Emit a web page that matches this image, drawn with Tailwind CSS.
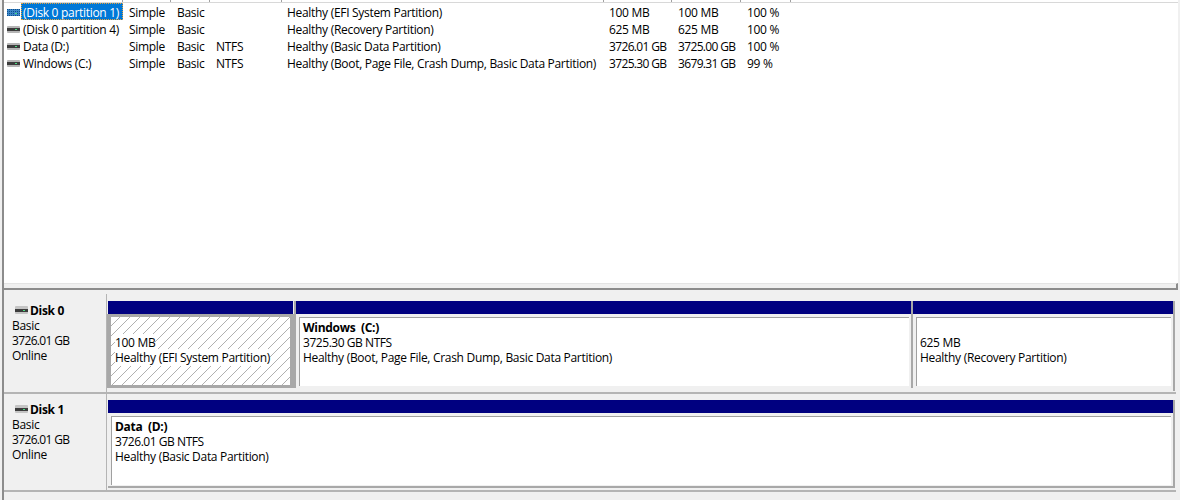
<!DOCTYPE html>
<html lang="en">
<head>
  <meta charset="UTF-8" />
  <title>Disk Management</title>
  <script src="https://cdn.jsdelivr.net/npm/@tailwindcss/browser@4"></script>
</head>
<body class="w-[1180px] h-[500px] overflow-hidden bg-[#f0f0f0] text-[12px] leading-[15px] text-black font-['Open_Sans',sans-serif] tracking-[-0.3px]">

  <!-- Volume list -->
  <div class="ml-[2px] mr-[2px] h-[290px] border-l-2 border-[#8c8c8c] flex flex-col">
    <div class="h-[283px] bg-white">
      <!-- column header, scrolled almost out of view -->
      <div class="h-[3px] grid grid-cols-[119px_48px_39px_72px_322px_68px_69px_50px_1fr] border-b border-[#d8d8d8]">
        <div class="border-r border-[#a0a0a0]"></div>
        <div class="border-r border-[#a0a0a0]"></div>
        <div class="border-r border-[#a0a0a0]"></div>
        <div class="border-r border-[#a0a0a0]"></div>
        <div class="border-r border-[#a0a0a0]"></div>
        <div class="border-r border-[#a0a0a0]"></div>
        <div class="border-r border-[#a0a0a0]"></div>
        <div class="border-r border-[#a0a0a0]"></div>
      </div>

      <div class="mt-[1px] grid grid-cols-[17px_102px_48px_39px_71px_322px_69px_69px_1fr] auto-rows-[17px] items-center">
        <div class="pl-[3px]">
          <svg width="13" height="7" viewBox="0 0 13 7" class="block"><rect width="13" height="7" rx="1" fill="#3d86c6"/><path d="M0 .5h13M0 2.5h13M0 4.5h13M0 6.5h13" stroke="#0a4f8f" stroke-dasharray="1 1"/><rect x="8" y="4" width="2" height="1" fill="#4ade80"/></svg>
        </div>
        <div class="self-start -mt-[1px] h-[17px] bg-[#0078d7] text-white pl-[2px] leading-[19px] outline-1 outline-dotted outline-offset-[-1px] outline-[#e8a33d]">(Disk 0 partition 1)</div>
        <div class="pl-[6px]">Simple</div><div class="pl-[6px]">Basic</div><div></div>
        <div class="pl-[6px]">Healthy (EFI System Partition)</div>
        <div class="pl-[6px]">100 MB</div><div class="pl-[6px]">100 MB</div><div class="pl-[6px]">100 %</div>

        <div class="pl-[3px]"><svg width="13" height="7" viewBox="0 0 13 7" class="block"><rect width="13" height="7" rx="1" fill="#b5b5b5"/><rect y="2" width="13" height="3" fill="#3c3c3c"/><rect x="8" y="3" width="2" height="1" fill="#4ade80"/></svg></div>
        <div class="pl-[2px]">(Disk 0 partition 4)</div>
        <div class="pl-[6px]">Simple</div><div class="pl-[6px]">Basic</div><div></div>
        <div class="pl-[6px]">Healthy (Recovery Partition)</div>
        <div class="pl-[6px]">625 MB</div><div class="pl-[6px]">625 MB</div><div class="pl-[6px]">100 %</div>

        <div class="pl-[3px]"><svg width="13" height="7" viewBox="0 0 13 7" class="block"><rect width="13" height="7" rx="1" fill="#b5b5b5"/><rect y="2" width="13" height="3" fill="#3c3c3c"/><rect x="8" y="3" width="2" height="1" fill="#4ade80"/></svg></div>
        <div class="pl-[2px]">Data (D:)</div>
        <div class="pl-[6px]">Simple</div><div class="pl-[6px]">Basic</div><div class="pl-[6px]">NTFS</div>
        <div class="pl-[6px]">Healthy (Basic Data Partition)</div>
        <div class="pl-[6px] tracking-[-0.65px]">3726.01 GB</div><div class="pl-[6px] tracking-[-0.65px]">3725.00 GB</div><div class="pl-[6px]">100 %</div>

        <div class="pl-[3px]"><svg width="13" height="7" viewBox="0 0 13 7" class="block"><rect width="13" height="7" rx="1" fill="#b5b5b5"/><rect y="2" width="13" height="3" fill="#3c3c3c"/><rect x="8" y="3" width="2" height="1" fill="#4ade80"/></svg></div>
        <div class="pl-[2px]">Windows (C:)</div>
        <div class="pl-[6px]">Simple</div><div class="pl-[6px]">Basic</div><div class="pl-[6px]">NTFS</div>
        <div class="pl-[6px] whitespace-nowrap">Healthy (Boot, Page File, Crash Dump, Basic Data Partition)</div>
        <div class="pl-[6px] tracking-[-0.65px]">3725.30 GB</div><div class="pl-[6px] tracking-[-0.65px]">3679.31 GB</div><div class="pl-[6px]">99 %</div>
      </div>
    </div>
    <!-- splitter band -->
    <div class="h-[7px] border-t border-[#e4e4e4] border-b-2 border-b-[#8c8c8c] border-r-2 border-r-[#8c8c8c]"></div>
  </div>

  <!-- Graphical view -->
  <div class="ml-[2px] mr-[4px] h-[210px] border-l-2 border-[#8c8c8c] pt-[4px]">

    <!-- Disk 0 -->
    <div class="flex h-[100px] border-b-2 border-[#b4b4b4]">
      <div class="w-[103px] shrink-0 border-r border-[#b4b4b4] pl-[8px] pt-[9px]">
        <div class="flex items-center h-[15px] font-bold">
          <svg width="13" height="8" viewBox="0 0 13 8" class="block ml-[3px] mr-[2px] mb-[2px]"><rect width="13" height="8" rx="1" fill="#c4c4c4"/><rect y="3" width="13" height="3" fill="#3c3c3c"/><rect x="8" y="4" width="2" height="1" fill="#4ade80"/></svg>
          Disk 0
        </div>
        <div>Basic</div><div class="tracking-[-0.65px]">3726.01 GB</div><div>Online</div>
      </div>
      <div class="flex-1 flex pt-[7px] pl-[1px]">
        <div class="w-[186px]">
          <div class="h-[13px] mr-[1px] bg-[#000080]"></div>
          <div class="-ml-[1px] h-[74px] border-x-4 border-y-[3px] border-[#a8a8a8] bg-[repeating-linear-gradient(135deg,#ffffff_0px,#ffffff_6px,#b0b0b0_6px,#b0b0b0_7.07px)] pl-[4px] pt-[18px]">
            <div><span class="bg-white">100 MB</span></div>
            <div><span class="bg-white">Healthy (EFI System Partition)</span></div>
          </div>
        </div>
        <div class="w-[2px] h-[87px] bg-[#a8a8a8]"></div>
        <div class="w-[615px]">
          <div class="h-[13px] bg-[#000080]"></div>
          <div class="mt-[3px] mr-[2px] ml-[3px] h-[69px] border-l border-t border-[#a0a0a0] bg-white pl-[3px] pt-[2px]">
            <div class="font-bold">Windows&nbsp; (C:)</div>
            <div class="tracking-[-0.45px]">3725.30 GB NTFS</div>
            <div>Healthy (Boot, Page File, Crash Dump, Basic Data Partition)</div>
          </div>
        </div>
        <div class="w-[2px] h-[87px] bg-[#a8a8a8]"></div>
        <div class="w-[260px]">
          <div class="h-[13px] bg-[#000080]"></div>
          <div class="mt-[3px] mr-[2px] ml-[3px] h-[69px] border-l border-t border-[#a0a0a0] bg-white pl-[3px] pt-[17px]">
            <div>625 MB</div>
            <div>Healthy (Recovery Partition)</div>
          </div>
        </div>
        <div class="w-[2px] h-[90px] bg-[#a8a8a8]"></div>
      </div>
    </div>

    <!-- Disk 1 -->
    <div class="flex h-[98px] border-b-2 border-[#b4b4b4]">
      <div class="w-[103px] shrink-0 border-r border-[#b4b4b4] pl-[8px] pt-[8px]">
        <div class="flex items-center h-[15px] font-bold">
          <svg width="13" height="8" viewBox="0 0 13 8" class="block ml-[3px] mr-[2px] mb-[2px]"><rect width="13" height="8" rx="1" fill="#c4c4c4"/><rect y="3" width="13" height="3" fill="#3c3c3c"/><rect x="8" y="4" width="2" height="1" fill="#4ade80"/></svg>
          Disk 1
        </div>
        <div>Basic</div><div class="tracking-[-0.65px]">3726.01 GB</div><div>Online</div>
      </div>
      <div class="flex-1 flex pt-[6px] pl-[1px]">
        <div class="w-[1065px] h-[88px] border-b-2 border-[#a8a8a8]">
          <div class="h-[13px] bg-[#000080]"></div>
          <div class="mt-[3px] mr-[2px] ml-[3px] h-[69px] border-l border-t border-[#a0a0a0] bg-white pl-[3px] pt-[2px]">
            <div class="font-bold">Data&nbsp; (D:)</div>
            <div class="tracking-[-0.45px]">3726.01 GB NTFS</div>
            <div>Healthy (Basic Data Partition)</div>
          </div>
        </div>
        <div class="w-[2px] h-[88px] bg-[#a8a8a8]"></div>
      </div>
    </div>
  </div>

</body>
</html>
